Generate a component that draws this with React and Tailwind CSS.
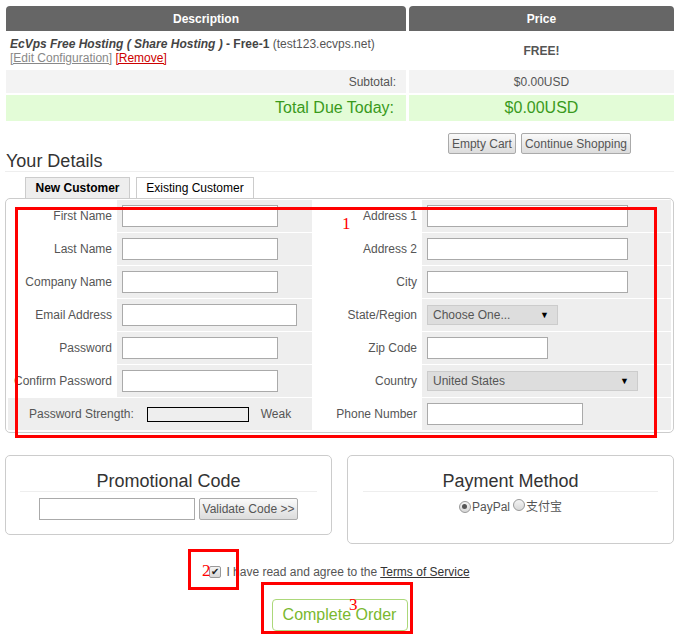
import React from 'react'

const LEFT_ROWS = [
  { label: 'First Name', w: 'w-[156px]' },
  { label: 'Last Name', w: 'w-[156px]' },
  { label: 'Company Name', w: 'w-[156px]' },
  { label: 'Email Address', w: 'w-[175px]' },
  { label: 'Password', w: 'w-[156px]' },
  { label: 'Confirm Password', w: 'w-[156px]' },
]

const RIGHT_ROWS = [
  { label: 'Address 1', w: 'w-[201px]' },
  { label: 'Address 2', w: 'w-[201px]' },
  { label: 'City', w: 'w-[201px]' },
  { label: 'State/Region', select: 'Choose One...', w: 'w-[131px]' },
  { label: 'Zip Code', w: 'w-[121px]' },
  { label: 'Country', select: 'United States', w: 'w-[211px]' },
  { label: 'Phone Number', w: 'w-[156px]' },
]

function TextBox({ w }) {
  return <div className={`${w} h-[22px] bg-white border border-[#aaa]`} />
}

function SelectBox({ w, text }) {
  return (
    <div className={`${w} h-[20px] bg-[#ddd] border border-[#ccc] flex items-center justify-between pl-[5px] pr-[8px] text-[#555]`}>
      <span>{text}</span>
      <span className="text-black text-[9px]">▼</span>
    </div>
  )
}

function GrayButton({ children, className = '' }) {
  return (
    <button className={`h-[21px] px-[3px] border border-[#aaa] rounded-[2px] bg-gradient-to-b from-[#fafafa] to-[#dcdcdc] text-[#555] leading-none ${className}`}>
      {children}
    </button>
  )
}

function Radio({ checked }) {
  return (
    <span className="inline-flex items-center justify-center w-[12px] h-[12px] rounded-full border border-[#999] bg-gradient-to-b from-[#f4f4f4] to-[#d8d8d8]">
      {checked && <span className="w-[5px] h-[5px] rounded-full bg-[#555]" />}
    </span>
  )
}

export default function App() {
  const rows = []
  for (let i = 0; i < 7; i++) {
    const l = LEFT_ROWS[i]
    const r = RIGHT_ROWS[i]
    if (l) {
      rows.push(
        <div key={`ll${i}`} className="h-[32px] bg-white flex items-center justify-end pr-[5px] whitespace-nowrap">
          {l.label}
        </div>,
        <div key={`li${i}`} className="h-[32px] bg-[#eee] flex items-center pl-[5px]">
          <TextBox w={l.w} />
        </div>
      )
    } else {
      rows.push(
        <div key="strength" className="col-span-2 h-[32px] bg-[#eee] flex items-center pl-[21px]">
          <span>Password Strength:</span>
          <span className="ml-[13px] w-[102px] h-[15px] border border-black bg-[#eee]" />
          <span className="ml-[12px]">Weak</span>
        </div>
      )
    }
    rows.push(
      <div key={`rl${i}`} className="h-[32px] bg-white flex items-center justify-end pr-[5px] whitespace-nowrap">
        {r.label}
      </div>,
      <div key={`ri${i}`} className="h-[32px] bg-[#eee] flex items-center pl-[5px]">
        {r.select ? <SelectBox w={r.w} text={r.select} /> : <TextBox w={r.w} />}
      </div>
    )
  }

  return (
    <div className="relative w-[679px] h-[636px] bg-white overflow-hidden font-['Liberation_Sans',Arial,sans-serif] text-[12px] leading-[14px] text-[#555]">
      <div className="pt-[6px] px-[5px]">
        {/* cart table */}
        <div className="ml-[1px] grid grid-cols-[400px_265px] gap-x-[3px] gap-y-[2px]">
          <div className="h-[25px] rounded-t-[4px] bg-[#666] text-white font-bold flex items-center justify-center">Description</div>
          <div className="h-[25px] rounded-t-[4px] bg-[#666] text-white font-bold flex items-center justify-center">Price</div>

          <div className="h-[35px] pl-[4px] pt-[4px] text-[#555]">
            <div>
              <span className="italic font-bold text-[#444]">EcVps Free Hosting ( Share Hosting )</span>
              <span className="font-bold text-[#444]"> - Free-1</span> (test123.ecvps.net)
            </div>
            <div>
              <span className="underline text-[#888]">[Edit Configuration]</span>{' '}
              <span className="underline text-[#cc0000]">[Remove]</span>
            </div>
          </div>
          <div className="h-[35px] flex items-center justify-center font-bold text-[#555]">FREE!</div>

          <div className="h-[23px] bg-[#f3f3f3] flex items-center justify-end pr-[10px]">Subtotal:</div>
          <div className="h-[23px] bg-[#f3f3f3] flex items-center justify-center">$0.00USD</div>

          <div className="h-[26px] bg-[#e3fcd7] flex items-center justify-end pr-[12px] text-[16px] text-[#3a9a1c]">Total Due Today:</div>
          <div className="h-[26px] bg-[#e3fcd7] flex items-center justify-center text-[16px] text-[#3a9a1c]">$0.00USD</div>
        </div>

        {/* cart buttons */}
        <div className="mt-[12px] flex justify-end gap-[5px] pr-[43px]">
          <GrayButton>Empty Cart</GrayButton>
          <GrayButton>Continue Shopping</GrayButton>
        </div>

        <h2 className="-mt-[3px] h-[21px] pl-[1px] text-[18px] leading-[20px] text-[#333] border-b border-[#eee]">Your Details</h2>

        {/* tabs */}
        <div className="mt-[5px] ml-[20px] flex gap-[6px]">
          <div className="w-[105px] h-[21px] border border-b-0 border-[#ccc] bg-[#eee] flex items-center justify-center font-bold text-black">New Customer</div>
          <div className="w-[118px] h-[21px] border border-b-0 border-[#ccc] bg-white flex items-center justify-center text-black">Existing Customer</div>
        </div>

        {/* signup panel */}
        <div className="w-[669px] border border-[#ccc] rounded-[5px] pt-[1px] px-[2px] pb-[2px]">
          <div className="grid grid-cols-[109px_195px_110px_249px] gap-y-px">{rows}</div>
        </div>

        {/* promo + payment */}
        <div className="mt-[22px] flex items-start gap-[15px]">
          <div className="w-[327px] h-[80px] border border-[#ccc] rounded-[5px] pt-[15px] px-[14px]">
            <div className="h-[21px] text-center text-[18px] leading-[20px] text-[#333] border-b border-[#eee]">Promotional Code</div>
            <div className="mt-[6px] flex justify-center gap-[4px]">
              <div className="w-[156px] h-[22px] border border-[#aaa] bg-white" />
              <GrayButton className="h-[22px]">Validate Code &gt;&gt;</GrayButton>
            </div>
          </div>
          <div className="w-[327px] h-[89px] border border-[#ccc] rounded-[5px] pt-[15px] px-[15px]">
            <div className="h-[21px] text-center text-[18px] leading-[20px] text-[#333] border-b border-[#eee]">Payment Method</div>
            <div className="mt-[7px] flex justify-center items-center">
              <Radio checked />
              <span className="ml-[1px]">PayPal</span>
              <span className="ml-[3px]"><Radio /></span>
              <span className="ml-[1px] font-['Liberation_Sans','Noto_Sans_CJK_SC',sans-serif]">支付宝</span>
            </div>
          </div>
        </div>

        {/* terms */}
        <div className="mt-[21px] flex justify-center items-center">
          <span className="w-[12px] h-[12px] border border-[#999] rounded-[2px] bg-gradient-to-b from-[#f4f4f4] to-[#d8d8d8] flex items-center justify-center text-[10px] leading-none text-[#222]">✔</span>
          <span className="ml-[5px]">I have read and agree to the </span>
          <span className="ml-[3px] underline text-[#333]">Terms of Service</span>
        </div>

        <div className="mt-[20px] flex justify-center">
          <button className="w-[136px] h-[32px] border border-[#acd87a] rounded-[4px] bg-white text-[16px] text-[#7ab82e]">Complete Order</button>
        </div>
      </div>

      {/* red annotations */}
      <div className="absolute left-[15px] top-[207px] w-[642px] h-[231px] border-[3px] border-[#f00]" />
      <span className="absolute left-[342px] top-[215px] text-[17px] leading-[18px] text-[#f00] font-['Liberation_Serif',serif]">1</span>
      <div className="absolute left-[188px] top-[549px] w-[51px] h-[41px] border-[3px] border-[#f00]" />
      <span className="absolute left-[202px] top-[562px] text-[17px] leading-[18px] text-[#f00] font-['Liberation_Serif',serif]">2</span>
      <div className="absolute left-[261px] top-[582px] w-[152px] h-[52px] border-[3px] border-[#f00]" />
      <span className="absolute left-[349px] top-[596px] text-[17px] leading-[18px] text-[#f00] font-['Liberation_Serif',serif]">3</span>
    </div>
  )
}
